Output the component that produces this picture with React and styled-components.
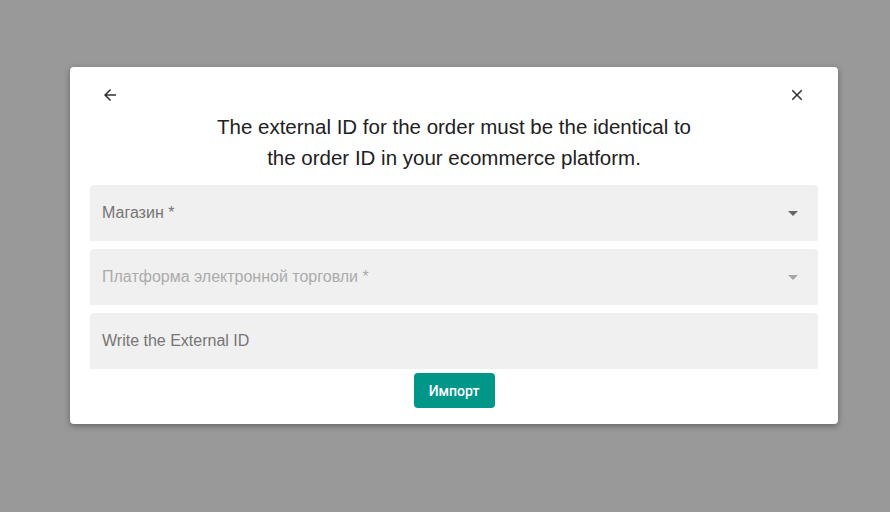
import React from "react";
import styled, { createGlobalStyle } from "styled-components";

const Global = createGlobalStyle`
  html, body { margin: 0; padding: 0; }
  body {
    background: #999999;
    font-family: "Liberation Sans", Arial, sans-serif;
    width: 890px;
    height: 512px;
    overflow: hidden;
  }
`;

const Backdrop = styled.div`
  padding: 67px 0 0 70px;
`;

const Dialog = styled.div`
  width: 768px;
  box-sizing: border-box;
  background: #ffffff;
  border-radius: 4px;
  box-shadow: 0 2px 6px rgba(0, 0, 0, 0.35);
  padding: 0 20px 16px;
  display: flex;
  flex-direction: column;
`;

const TopBar = styled.div`
  height: 44px;
  box-sizing: border-box;
  padding: 19px 12px 0 11px;
  display: flex;
  justify-content: space-between;
  align-items: flex-start;
`;

const IconBtn = styled.button`
  width: 18px;
  height: 18px;
  padding: 0;
  border: 0;
  background: transparent;
  color: #303030;
  display: flex;
  cursor: pointer;
  svg { width: 18px; height: 18px; fill: currentColor; }
`;

const Title = styled.h2`
  margin: 0 0 12px;
  font-size: 20.5px;
  line-height: 31px;
  font-weight: 400;
  text-align: center;
  color: #212121;
`;

const Fields = styled.div`
  display: flex;
  flex-direction: column;
  gap: 8px;
`;

const Field = styled.div`
  height: 56px;
  box-sizing: border-box;
  background: #f0f0f0;
  border-radius: 4px 4px 0 0;
  padding: 0 13px 0 12px;
  display: flex;
  align-items: center;
  justify-content: space-between;
`;

const Label = styled.span`
  font-size: 16px;
  color: ${(p) => (p.$disabled ? "#ababab" : "#757575")};
`;

const Caret = styled.svg`
  width: 24px;
  height: 24px;
  fill: ${(p) => (p.$disabled ? "#a6a6a6" : "#666666")};
`;

const Actions = styled.div`
  display: flex;
  justify-content: center;
  margin-top: 4px;
`;

const Button = styled.button`
  width: 81px;
  height: 35px;
  border: 0;
  border-radius: 4px;
  background: #009688;
  color: #ffffff;
  font-family: Roboto, "Liberation Sans", Arial, sans-serif;
  font-size: 14px;
  font-weight: 500;
  cursor: pointer;
`;

const SelectField = ({ label, disabled }) => (
  <Field>
    <Label $disabled={disabled}>{label}</Label>
    <Caret viewBox="0 0 24 24" $disabled={disabled}>
      <path d="M7 10l5 5 5-5z" />
    </Caret>
  </Field>
);

export default function App() {
  return (
    <>
      <Global />
      <Backdrop>
        <Dialog>
          <TopBar>
            <IconBtn aria-label="back">
              <svg viewBox="0 0 24 24">
                <path d="M20 11H7.83l5.59-5.59L12 4l-8 8 8 8 1.41-1.41L7.83 13H20v-2z" />
              </svg>
            </IconBtn>
            <IconBtn aria-label="close">
              <svg viewBox="0 0 24 24">
                <path d="M19 6.41L17.59 5 12 10.59 6.41 5 5 6.41 10.59 12 5 17.59 6.41 19 12 13.41 17.59 19 19 17.59 13.41 12z" />
              </svg>
            </IconBtn>
          </TopBar>
          <Title>
            The external ID for the order must be the identical to
            <br />
            the order ID in your ecommerce platform.
          </Title>
          <Fields>
            <SelectField label="Магазин *" />
            <SelectField label="Платформа электронной торговли *" disabled />
            <Field>
              <Label>Write the External ID</Label>
            </Field>
          </Fields>
          <Actions>
            <Button>Импорт</Button>
          </Actions>
        </Dialog>
      </Backdrop>
    </>
  );
}
